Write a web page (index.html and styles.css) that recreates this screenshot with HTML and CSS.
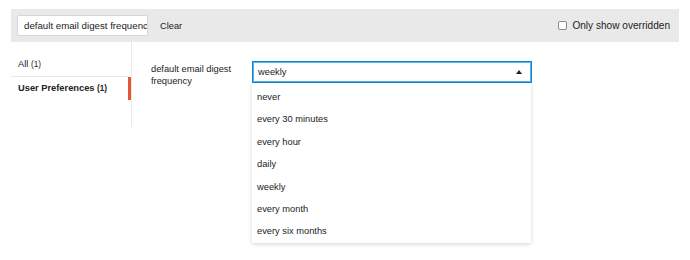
FILE: index.html
```html
<!DOCTYPE html>
<html>
<head>
<meta charset="utf-8">
<link rel="stylesheet" href="styles.css">
</head>
<body>
<div class="page">
  <div class="bar">
    <div class="search">default email digest frequency</div>
    <span class="clear">Clear</span>
    <label class="only"><span class="box"></span>Only show overridden</label>
  </div>
  <div class="main">
    <div class="sidebar">
      <div class="nav first">All <small>(1)</small></div>
      <div class="nav active">User Preferences <small>(1)</small></div>
    </div>
    <div class="content">
      <div class="label">default email digest frequency</div>
      <div class="field">
        <div class="select"><span>weekly</span><span class="caret"></span></div>
        <ul class="menu">
          <li>never</li>
          <li>every 30 minutes</li>
          <li>every hour</li>
          <li>daily</li>
          <li>weekly</li>
          <li>every month</li>
          <li>every six months</li>
        </ul>
      </div>
    </div>
  </div>
</div>
</body>
</html>
```
FILE: styles.css
```css
html, body { margin: 0; padding: 0; background: #fff; }
body { font-family: "Liberation Sans", Arial, sans-serif; font-size: 9.3px; color: #222; min-height: 260px; }
.page { padding: 9px 11px; min-height: 242px; }
.bar {
  background: #e9e9e9;
  height: 33px;
  display: flex;
  align-items: center;
  padding: 0 9px 0 6px;
}
.search {
  box-sizing: border-box;
  width: 131px;
  height: 21px;
  background: #fff;
  border: 1px solid #d6d6d6;
  border-radius: 2px;
  padding: 0 2px 0 6px;
  line-height: 19px;
  font-size: 9.7px;
  white-space: nowrap;
  overflow: hidden;
}
.clear { margin-left: 12px; }
.only { margin-left: auto; display: flex; align-items: center; font-size: 10.1px; }
.box {
  width: 7px; height: 7px;
  border: 1px solid #8a8a8a;
  border-radius: 2px;
  background: #fff;
  margin-right: 5px;
}
.main { display: flex; }
.sidebar {
  width: 120px;
  border-right: 1px solid #e9e9e9;
  padding-top: 11px;
  height: 74px;
}
.nav { padding-left: 7px; line-height: 23px; }
.nav small { font-size: 8.2px; }
.first { border-bottom: 1px solid #e9e9e9; margin-right: 3px; line-height: 22px; }
.active { font-weight: bold; border-right: 3px solid #e45735; }
.content { display: flex; padding: 19px 0 0 19px; }
.label { width: 101px; padding-top: 2px; line-height: 12px; }
.field { position: relative; }
.select {
  box-sizing: border-box;
  width: 280px;
  height: 22px;
  border: 1px solid #0a88d4;
  box-shadow: inset 0 0 0 1px rgba(10,136,212,.65);
  display: flex;
  align-items: center;
  padding: 0 8px 0 5px;
  justify-content: space-between;
}
.caret {
  width: 0; height: 0;
  border-left: 3px solid transparent;
  border-right: 3px solid transparent;
  border-bottom: 4px solid #222;
  margin-right: 1px;
}
.menu {
  position: absolute;
  top: 22px; left: 0;
  width: 279px;
  margin: 0;
  padding: 3px 0 0;
  list-style: none;
  background: #fff;
  box-shadow: 0 1px 4px rgba(0,0,0,.18);
  z-index: 2;
}
.menu li { padding-left: 5px; line-height: 22.4px; }
```
